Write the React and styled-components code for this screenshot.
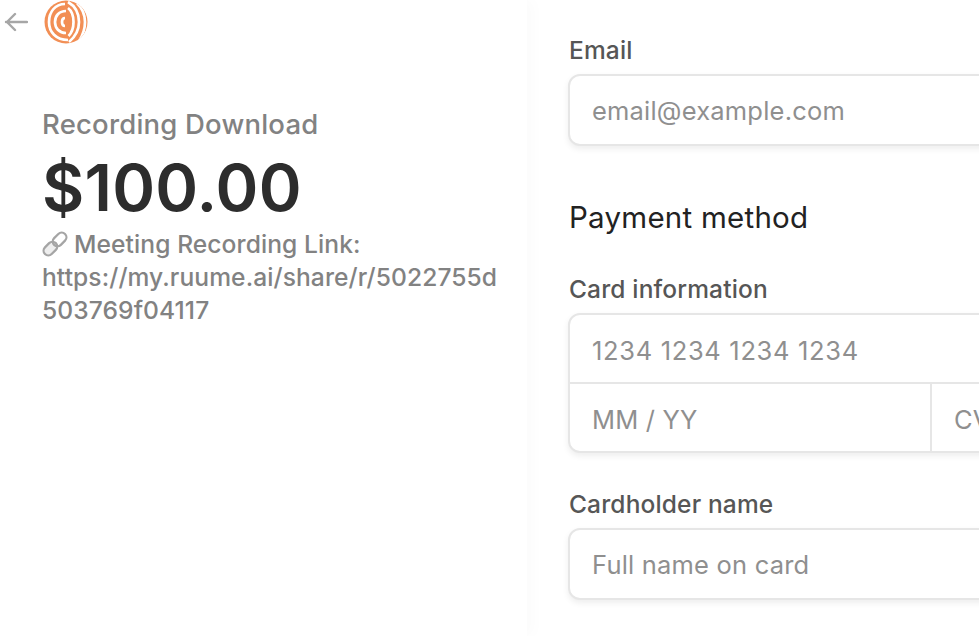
import React from "react";
import styled, { createGlobalStyle } from "styled-components";

const FONT = `Inter, "Liberation Sans", sans-serif`;

const Global = createGlobalStyle`
  html, body {
    margin: 0;
    padding: 0;
    background: #fff;
    overflow: hidden;
  }
`;

const Page = styled.div`
  display: flex;
  width: 979px;
  height: 636px;
  overflow: hidden;
  font-family: ${FONT};
`;

const Summary = styled.section`
  flex: 0 0 527px;
  box-sizing: border-box;
  height: 636px;
  padding-left: 42px;
  box-shadow: 6px 0 14px rgba(0, 0, 0, 0.02);
`;

const Header = styled.div`
  display: flex;
  align-items: center;
  gap: 16px;
  height: 44px;
  margin-left: -38px;
`;

const ProductName = styled.div`
  margin-top: 62px;
  font-size: 27.5px;
  line-height: 36px;
  font-weight: 500;
  letter-spacing: 0.2px;
  color: #828282;
`;

const Price = styled.div`
  margin-top: 11px;
  font-size: 65px;
  line-height: 70px;
  font-weight: 600;
  letter-spacing: 0.2px;
  color: #2d2d2d;
`;

const Description = styled.div`
  margin-top: 5px;
  font-size: 24.6px;
  line-height: 33px;
  font-weight: 500;
  letter-spacing: 0.08px;
  color: #828282;
`;

const LinkIcon = styled.svg`
  width: 26px;
  height: 26px;
  margin-right: 6px;
  vertical-align: -4px;
`;

const Form = styled.section`
  flex: 1;
  min-width: 0;
  padding: 36px 0 0 41px;
`;

const Field = styled.div`
  width: 480px;
  margin-bottom: ${(p) => p.$gap || 0}px;
`;

const Label = styled.div`
  margin: 0 0 10px 1px;
  font-size: 24.5px;
  line-height: 28px;
  font-weight: 500;
  letter-spacing: 0.15px;
  color: #565656;
`;

const Heading = styled.h2`
  margin: 0 0 40px 1px;
  font-size: 29.5px;
  line-height: 36px;
  font-weight: 400;
  letter-spacing: 0.25px;
  color: #222;
`;

const InputBox = styled.div`
  box-sizing: border-box;
  border: 2px solid #e6e6e6;
  border-radius: 12px;
  background: #fff;
  box-shadow: 0 3px 6px rgba(0, 0, 0, 0.07);
  overflow: hidden;
`;

const Cell = styled.div`
  box-sizing: border-box;
  flex: ${(p) => (p.$fill ? "1" : "0 0 auto")};
  width: ${(p) => (p.$width ? `${p.$width}px` : "auto")};
  height: ${(p) => (p.$compact ? 67 : 68)}px;
  padding: ${(p) => (p.$compact ? "3px 0 0 22px" : "0 0 0 22px")};
  display: flex;
  align-items: center;
  font-size: 25.5px;
  letter-spacing: ${(p) => (p.$digits ? 0.67 : 0.2)}px;
  color: #8f8f8f;
  white-space: nowrap;
`;

const Row = styled.div`
  display: flex;
  border-top: ${(p) => (p.$ruled ? "2px solid #e6e6e6" : "none")};
`;

const Divider = styled.div`
  width: 2px;
  background: #e6e6e6;
`;

const Arrow = () => (
  <svg width="24" height="24" viewBox="0 0 24 24" fill="none" stroke="#a6a6a6" strokeWidth="2.4" strokeLinecap="round" strokeLinejoin="round">
    <path d="M23 12H2M11 4l-8 8 8 8" />
  </svg>
);

const Logo = () => (
  <svg width="44" height="44" viewBox="0 0 44 44">
    <defs>
      <clipPath id="disc">
        <circle cx="22" cy="22" r="21.5" />
      </clipPath>
    </defs>
    <circle cx="22" cy="22" r="21.5" fill="#f28f55" />
    <g clipPath="url(#disc)" fill="none" stroke="#fff" strokeWidth="2.7">
      <path d="M21 4C11 4 5 12 5 22s7 18 19 18" />
      <path d="M22 11C15 11 11 16 11 22s4 11 11 11" />
      <path d="M21 18c-2 0-3 2-3 4s1 4 3 4" />
      <path d="M24 8c4 3 5.5 8 5.5 14s-2 11-5 14" />
      <path d="M24 2c7 4 11 11 11 20s-4 15-10 20" />
      <path d="M33 3c5 5 8 12 8 19s-2 13-6 19" />
    </g>
  </svg>
);

const Chain = () => (
  <LinkIcon viewBox="2 2 22 22" fill="none">
    <g stroke="#a5a5a5" strokeWidth="1.9" transform="rotate(-45 13 13)">
      <rect x="1" y="9" width="13" height="8" rx="4" fill="#eeeeee" />
      <rect x="12" y="9" width="13" height="8" rx="4" />
    </g>
  </LinkIcon>
);

export default function App() {
  return (
    <>
      <Global />
      <Page>
        <Summary>
          <Header>
            <Arrow />
            <Logo />
          </Header>
          <ProductName>Recording Download</ProductName>
          <Price>$100.00</Price>
          <Description>
            <Chain />
            Meeting Recording Link:
            <br />
            https://my.ruume.ai/share/r/5022755d
            <br />
            503769f04117
          </Description>
        </Summary>
        <Form>
          <Field $gap={53}>
            <Label>Email</Label>
            <InputBox>
              <Cell>email@example.com</Cell>
            </InputBox>
          </Field>
          <Heading>Payment method</Heading>
          <Field $gap={37}>
            <Label>Card information</Label>
            <InputBox>
              <Row>
                <Cell $fill $compact $digits>1234 1234 1234 1234</Cell>
              </Row>
              <Row $ruled>
                <Cell $width={360} $compact>MM / YY</Cell>
                <Divider />
                <Cell $fill $compact>CVC</Cell>
              </Row>
            </InputBox>
          </Field>
          <Field>
            <Label>Cardholder name</Label>
            <InputBox>
              <Cell>Full name on card</Cell>
            </InputBox>
          </Field>
        </Form>
      </Page>
    </>
  );
}
